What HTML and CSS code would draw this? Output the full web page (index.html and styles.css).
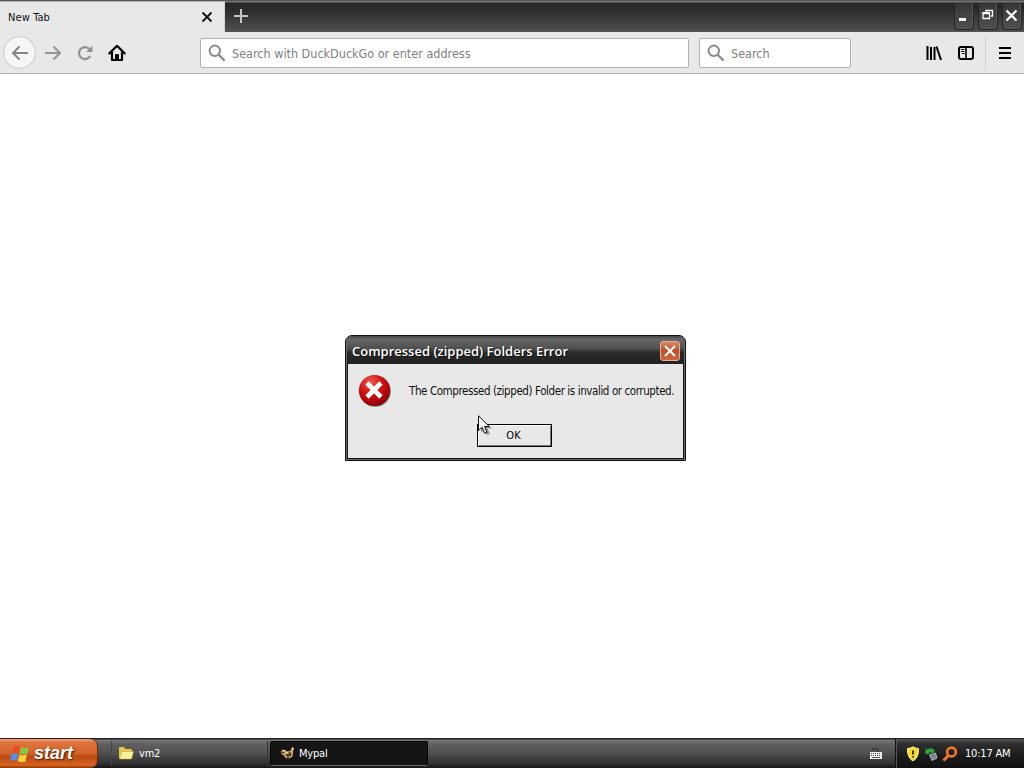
FILE: index.html
```
<!DOCTYPE html>
<html lang="en">
<head>
    <meta charset="UTF-8">
    <meta name="viewport" content="width=device-width, initial-scale=1.0">
    <title>New Tab</title>
    <link rel="stylesheet" href="styles.css">
</head>
<body>

    <!-- Tab strip -->
    <header class="tabbar">
        <div class="tab">
            <span class="tab-title">New Tab</span>
            <svg class="tab-close" width="12" height="12" viewBox="0 0 12 12"><path d="M1.5 1.5l9 9M10.5 1.5l-9 9" stroke="#111" stroke-width="1.8" fill="none"/></svg>
        </div>
        <svg class="new-tab" width="16" height="16" viewBox="0 0 16 16"><path d="M8 1v14M1 8h14" stroke="#c4c4c4" stroke-width="2"/></svg>
        <div class="controls">
            <span class="control"><svg width="18" height="24" viewBox="0 0 18 24"><path d="M4 15h7v3H4z" fill="#fff"/></svg></span>
            <span class="control"><svg width="18" height="24" viewBox="0 0 18 24"><path d="M7 9V7.500h6.500V13H12" fill="none" stroke="#fff" stroke-width="1.300"/><path d="M4 10.500h6.500v5H4z" fill="none" stroke="#fff" stroke-width="1.300"/><path d="M3.400 10h7.700" stroke="#fff" stroke-width="2"/></svg></span>
            <span class="control"><svg width="18" height="24" viewBox="0 0 18 24"><path d="M3.500 7.500l10 10M13.500 7.500l-10 10" stroke="#fff" stroke-width="2.200"/></svg></span>
        </div>
    </header>

    <!-- Navigation toolbar -->
    <nav class="toolbar">
        <span class="back"><svg width="18" height="16" viewBox="0 0 18 16"><path d="M17 8H2M8.5 1.5L2 8l6.5 6.500" fill="none" stroke="#858585" stroke-width="2"/></svg></span>
        <svg class="forward" width="18" height="16" viewBox="0 0 18 16"><path d="M1 8h15M9.5 1.5L16 8l-6.5 6.500" fill="none" stroke="#959595" stroke-width="2"/></svg>
        <svg class="reload" width="16" height="16" viewBox="0 0 16 16"><path d="M13.2 11A6 6 0 1 1 12.6 4.2" fill="none" stroke="#929292" stroke-width="2.200"/><path d="M15.5 0.8V7H9.3z" fill="#929292"/></svg>
        <svg class="home" width="18" height="18" viewBox="0 0 18 18"><path d="M1.4 9.4L9 1.8l7.6 7.6" fill="none" stroke="#000" stroke-width="2.2" stroke-linejoin="round" stroke-linecap="round"/><path d="M4 8v8h10V8" fill="none" stroke="#000" stroke-width="2.2" stroke-linejoin="round"/><path d="M7 16v-5q0-1 1-1h2q1 0 1 1v5z" fill="#000"/></svg>
        <div class="field address">
            <svg width="18" height="18" viewBox="0 0 18 18"><circle cx="6.8" cy="6.8" r="5.2" fill="none" stroke="#8c8c8c" stroke-width="2"/><path d="M10.6 10.6l6 6" stroke="#8c8c8c" stroke-width="2.2"/></svg>
            <span>Search with DuckDuckGo or enter address</span>
        </div>
        <div class="field search">
            <svg width="18" height="18" viewBox="0 0 18 18"><circle cx="6.8" cy="6.8" r="5.2" fill="none" stroke="#8c8c8c" stroke-width="2"/><path d="M10.6 10.6l6 6" stroke="#8c8c8c" stroke-width="2.2"/></svg>
            <span>Search</span>
        </div>
        <div class="tools">
            <svg width="16" height="16" viewBox="0 0 16 16"><path d="M1.5 1v14M5 2v13M8.5 2v13" stroke="#000" stroke-width="2"/><path d="M10.5 1.5l4.500 13.500" stroke="#000" stroke-width="2"/></svg>
            <svg class="sidebar" width="16" height="14" viewBox="0 0 16 14"><rect x="1" y="1" width="14" height="12" rx="2" fill="none" stroke="#000" stroke-width="2"/><path d="M8 1v12" stroke="#000" stroke-width="1.6"/><path d="M3 3.500h3.500M3 5.500h3.500M4 7.500h2.500" stroke="#000"/></svg>
            <span class="separator"></span>
            <svg width="12" height="12" viewBox="0 0 12 12"><path d="M0 1h12M0 6h12M0 11h12" stroke="#000" stroke-width="2"/></svg>
        </div>
    </nav>

    <main class="page"></main>

    <!-- Error dialog -->
    <section class="dialog">
        <div class="dialog-title">
            <span>Compressed (zipped) Folders Error</span>
            <span class="dialog-close"><svg width="12" height="12" viewBox="0 0 12 12"><path d="M1 1l10 10M11 1L1 11" stroke="#fff" stroke-width="2"/></svg></span>
        </div>
        <div class="dialog-body">
            <div class="message">
                <svg width="34" height="34" viewBox="0 0 34 34">
                    <defs><radialGradient id="red" cx=".38" cy=".25" r=".8"><stop offset="0" stop-color="#ee5a50"/><stop offset=".5" stop-color="#d00d10"/><stop offset="1" stop-color="#860004"/></radialGradient></defs>
                    <circle cx="17.2" cy="17.2" r="15.6" fill="#777"/>
                    <circle cx="16.5" cy="16.5" r="15.6" fill="url(#red)"/>
                    <path d="M9 9l14 14M23 9L9 23" stroke="#fff" stroke-width="4.6"/>
                </svg>
                <p>The Compressed (zipped) Folder is invalid or corrupted.</p>
            </div>
            <button class="ok">OK</button>
        </div>
    </section>

    <svg class="cursor" width="14" height="22" viewBox="0 0 14 22"><path d="M3 3v14.5l3.5-3 2.5 5.5 3-1-2.5-5.5H14z" fill="#000" opacity=".35"/><path d="M.5 .7v14.800l3.600-3.200 2.500 6 2.400-1-2.500-5.800h4.700z" fill="#f4f4f4" stroke="#111"/></svg>

    <!-- Taskbar -->
    <footer class="taskbar">
        <div class="start">
            <svg width="20" height="18" viewBox="0 0 20 18">
                <path d="M3.800 1.400Q7-.2 10 1.600L8.600 8Q5.500 6.500 2 8z" fill="#ee4a20"/>
                <path d="M11 2.200Q14.500 3.700 19 2.200L17.300 8.700Q13 10 9.600 8.500z" fill="#86c840"/>
                <path d="M1.700 8.900Q5 7.500 8.300 9L6.700 15.600Q4 14.200 0 15.600z" fill="#5a8fe8"/>
                <path d="M9.300 9.500Q12.500 11 17 9.600L15.400 16.400Q11.500 17.700 7.700 16.200z" fill="#fbd338"/>
            </svg>
            <span>start</span>
        </div>
        <div class="task task-folder">
            <svg width="16" height="14" viewBox="0 0 16 14"><path d="M1 12V2q0-1 1-1h4l1.500 2H13q1 0 1 1v8z" fill="#e4c851"/><path d="M1.500 13L4 5.500h11.500L13.500 13z" fill="#fff39a" stroke="#c9aa35" stroke-width=".6"/></svg>
            <span>vm2</span>
        </div>
        <div class="task task-active">
            <svg width="16" height="14" viewBox="0 0 16 14"><path d="M1 5q3-3 5 0 3 1 5-1l1-3 2 1-1 4q1 5-4 6.500-4 .5-5-3Q1 9 1 5z" fill="#c9a468"/><path d="M2 6l2 1M6 9h5M9 6l2 3M7 11.500h2" stroke="#20150c" stroke-width="1.300"/><path d="M3 4.500h2M12.500 2v2M6 7h2" stroke="#fff0c8" stroke-width="1.200"/></svg>
            <span>Mypal</span>
        </div>
        <svg class="keyboard" width="14" height="13" viewBox="0 0 14 13"><path d="M3 1q1 2 3 1t3 1v2" fill="none" stroke="#222"/><path d="M1 5h12v7H1z" fill="#eee"/><path d="M2 6.500h10M2 8.500h10" stroke="#444" stroke-dasharray="1 1"/><path d="M3 10.500h8" stroke="#555"/></svg>
        <div class="tray">
            <svg width="14" height="16" viewBox="0 0 14 16"><path d="M7 .8Q9.500 2.500 12.500 2.500 13 11.500 7 15 1 11.500 1.500 2.500 4.500 2.500 7 .8z" fill="#f7d92c" stroke="#f8f0b0"/><path d="M7 4.500v4M7 10v1.500" stroke="#2c2500" stroke-width="1.800"/></svg>
            <svg width="14" height="14" viewBox="0 0 14 14"><path d="M5.500 8l6-2 1.500 5-5 2.500z" fill="#788894" stroke="#c0ccd2" stroke-width=".8"/><path d="M1 7l1-6 1.500 1.500Q7-.5 11 3.500L8.500 7Q6.500 4.500 5 5.500L6.500 7z" fill="#35a63d" stroke="#145c1d" stroke-width=".5"/></svg>
            <svg width="16" height="16" viewBox="0 0 16 16"><circle cx="9.500" cy="6" r="4.400" fill="none" stroke="#ef7527" stroke-width="2.600"/><path d="M6.500 9.500L1.500 14.500" stroke="#ef7527" stroke-width="3"/></svg>
            <span class="clock">10:17 AM</span>
        </div>
    </footer>

</body>
</html>
```
FILE: styles.css
```
* { box-sizing: border-box; }
body { margin: 0; height: 768px; display: flex; flex-direction: column; overflow: hidden; background: #fff; font-family: "DejaVu Sans Condensed", "DejaVu Sans", sans-serif; font-size: 11px; color: #111; }
svg { display: block; flex: none; }
p { margin: 0; }
span { white-space: nowrap; }

/* tab strip */
.tabbar { display: flex; height: 32px; border-top: 1px solid #555; background: linear-gradient(#777 0, #777 1px, #272727 2px, #2c2c2c 30%, #4c4c4c 92%, #555); }
.tab { width: 225px; height: 31px; padding: 0 11px 0 8px; display: flex; align-items: center; justify-content: space-between; background: #e8e8e8; border-top: 1px solid #b0b0b0; border-right: 1px solid #d5d5d5; }
.tab-title { letter-spacing: 0.1px; }
.new-tab { margin: 7px 0 0 8px; }
.controls { display: flex; gap: 4px; margin: 2px 2px 0 auto; }
.control { width: 20px; height: 27px; border: 1px solid #252525; border-top: 0; border-radius: 0 0 3px 3px; background: linear-gradient(#363636, #505050); box-shadow: inset -1px -1px #555; }

/* toolbar */
.toolbar { display: flex; align-items: center; height: 42px; padding: 0 13px 0 3px; background: #e8e8e8; border-bottom: 1px solid #b4b4b4; }
.back { width: 33px; height: 33px; display: flex; align-items: center; justify-content: center; border: 1px solid #c8c8c8; border-radius: 50%; background: #f6f6f6; }
.forward { margin-left: 8px; }
.reload { margin-left: 15px; }
.home { margin-left: 15px; }
.field { height: 30px; display: flex; align-items: center; gap: 6px; padding-left: 7px; background: #fff; border: 1px solid #b2b2b2; border-radius: 2px; font-size: 12.5px; color: #808080; }
.field span { padding-top: 1px; }
.address { width: 489px; margin-left: 74px; }
.search { width: 152px; margin-left: 10px; }
.tools { margin-left: auto; display: flex; align-items: center; }
.sidebar { margin-left: 16px; }
.separator { width: 1px; height: 34px; margin: 0 13px 0 11px; background: #d0d0d0; }

.page { flex: 1; }

/* dialog */
.dialog { position: absolute; left: 345px; top: 335px; width: 341px; height: 126px; border: 1px solid #111; border-radius: 7px 7px 0 0; padding: 0 1px 1px; background: #6b6b6b; }
.dialog-title { height: 28px; padding: 2px 4px 0 5px; display: flex; align-items: center; justify-content: space-between; border-radius: 6px 6px 0 0; background: linear-gradient(#444, #686868 12%, #4e4e4e 45%, #292929 60%, #222); color: #fff; font: 600 13px "Open Sans", sans-serif; text-shadow: 1px 1px #111; }
.dialog-close { width: 20px; height: 20px; display: flex; align-items: center; justify-content: center; border: 1px solid #e2b09a; border-radius: 3px; background: linear-gradient(#d88768, #bd4e27 50%, #cf673f); }
.dialog-body { height: 95px; border: 1px solid #111; border-top: 0; background: #e8e8e8; padding: 10px 0 0 10px; }
.message { display: flex; align-items: center; gap: 17px; }
.message p { white-space: nowrap; font-size: 11.5px; letter-spacing: -0.41px; }
.ok { display: block; width: 75px; height: 23px; margin: 16px 0 0 119px; padding: 0 2px 0 0; border: 1px solid #000; background: #e8e8e8; box-shadow: inset 1px 1px #fff, inset -1px -1px #777; font: inherit; }
.cursor { position: absolute; left: 478px; top: 415px; }

/* taskbar */
.taskbar { display: flex; align-items: center; height: 30px; color: #fff; background: linear-gradient(#222 0, #222 1px, #777 2px, #606060 20%, #505050 50%, #303030 85%, #151515); }
.start { width: 98px; height: 29px; margin-top: 1px; padding-left: 10px; display: flex; align-items: center; gap: 4px; border-radius: 0 8px 8px 0; border-right: 1px solid #742800; background: linear-gradient(#f0a078, #df743e 12%, #d36228 50%, #b84911 60%, #d86320 90%, #893600); font: italic bold 18px "Liberation Sans", sans-serif; text-shadow: 1px 1px 2px #421500; }
.task { height: 25px; display: flex; align-items: center; gap: 5px; padding-left: 6px; }
.task-folder { width: 157px; margin-left: 13px; border-left: 1px solid #444; border-right: 1px solid #333; }
.task-folder span { letter-spacing: -0.2px; }
.task-active { width: 158px; margin-left: 2px; padding-left: 9px; gap: 3px; background: #151515; border: 1px solid #050505; border-bottom-color: #666; border-radius: 2px; }
.task-active span { letter-spacing: -0.2px; padding-top: 1px; }
.keyboard { margin: 1px 12px 0 auto; }
.tray { width: 129px; height: 29px; margin-top: 1px; padding-left: 10px; display: flex; align-items: center; gap: 4px; border-left: 1px solid #111; box-shadow: inset 1px 0 #555; background: linear-gradient(#555, #303030 15%, #1b1b1b 60%, #111); }
.clock { margin-left: 3px; letter-spacing: -0.2px; }
```
